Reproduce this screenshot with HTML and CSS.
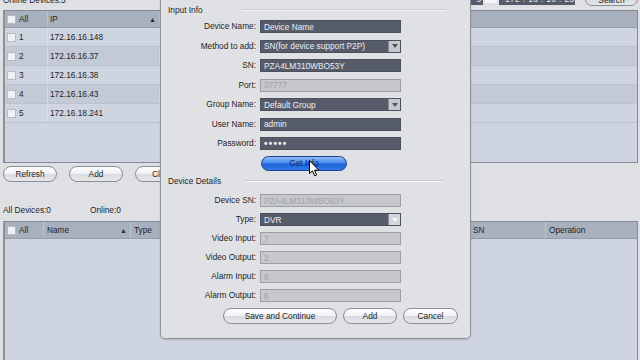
FILE: index.html
```html
<!DOCTYPE html>
<html lang="en">
<head>
  <meta charset="UTF-8" />
  <meta name="viewport" content="width=device-width, initial-scale=1" />
  <title>Device Manager - Manual Add</title>
  <link rel="stylesheet" href="styles.css">
</head>
<body>

  <div class="app">
    <div class="topbar">
      <span class="caption">Online Devices:5</span>
      <div class="filter">
        <span class="ipbox short">5</span>
        <span class="dash"></span>
        <span class="ipbox wide">172 . 16 . 16 . 255</span>
        <button class="pill search">Search</button>
      </div>
    </div>

    <div class="grid grid-online">
      <div class="grid-head">
        <div class="cell c-check"><i class="cb"></i>All</div>
        <div class="cell c-ip">IP<span class="sort">&#9650;</span></div>
        <div class="cell c-rest"></div>
      </div>
      <div class="row">
        <div class="cell c-check"><i class="cb"></i>1</div>
        <div class="cell c-ip">172.16.16.148</div>
        <div class="cell c-rest"></div>
      </div>
      <div class="row alt">
        <div class="cell c-check"><i class="cb"></i>2</div>
        <div class="cell c-ip">172.16.16.37</div>
        <div class="cell c-rest"></div>
      </div>
      <div class="row">
        <div class="cell c-check"><i class="cb"></i>3</div>
        <div class="cell c-ip">172.16.16.38</div>
        <div class="cell c-rest"></div>
      </div>
      <div class="row alt">
        <div class="cell c-check"><i class="cb"></i>4</div>
        <div class="cell c-ip">172.16.16.43</div>
        <div class="cell c-rest"></div>
      </div>
      <div class="row">
        <div class="cell c-check"><i class="cb"></i>5</div>
        <div class="cell c-ip">172.16.18.241</div>
        <div class="cell c-rest"></div>
      </div>
    </div>

    <div class="actions">
      <button class="pill">Refresh</button>
      <button class="pill">Add</button>
      <button class="pill">Clear</button>
    </div>

    <div class="summary">
      <span class="count">All Devices:0</span>
      <span>Online:0</span>
    </div>

    <div class="grid grid-all">
      <div class="grid-head">
        <div class="cell c-check2"><i class="cb"></i>All</div>
        <div class="cell c-name">Name<span class="sort">&#9650;</span></div>
        <div class="cell c-type">Type</div>
        <div class="cell c-sn">SN</div>
        <div class="cell c-op">Operation</div>
      </div>
    </div>
  </div>

  <div class="dialog">
    <div class="group-head">
      <span class="group-title">Input Info</span>
      <span class="group-line"></span>
    </div>
    <div class="form">
      <label>Device Name:</label>
      <div class="field">Device Name</div>
      <label>Method to add:</label>
      <div class="field select">SN(for device support P2P)<span class="arrow"><i></i></span></div>
      <label>SN:</label>
      <div class="field">PZA4LM310WBO53Y</div>
      <label>Port:</label>
      <div class="field off">37777</div>
      <label>Group Name:</label>
      <div class="field select">Default Group<span class="arrow"><i></i></span></div>
      <label>User Name:</label>
      <div class="field">admin</div>
      <label>Password:</label>
      <div class="field dots">&bull;&bull;&bull;&bull;&bull;</div>
    </div>
    <button class="btn-blue">Get Info</button>

    <div class="group-head">
      <span class="group-title">Device Details</span>
      <span class="group-line"></span>
    </div>
    <div class="form details">
      <label>Device SN:</label>
      <div class="field off">PZA4LM310WBO53Y</div>
      <label>Type:</label>
      <div class="field select dim">DVR<span class="arrow"><i></i></span></div>
      <label>Video Input:</label>
      <div class="field off">7</div>
      <label>Video Output:</label>
      <div class="field off">2</div>
      <label>Alarm Input:</label>
      <div class="field off">8</div>
      <label>Alarm Output:</label>
      <div class="field off">6</div>
    </div>

    <div class="dialog-actions">
      <button class="pill w-save">Save and Continue</button>
      <button class="pill w-add">Add</button>
      <button class="pill w-cancel">Cancel</button>
    </div>
  </div>

  <svg class="cursor" width="11" height="17" viewBox="0 0 11 17">
    <path d="M0.5 0.5 L0.5 13.5 L3.5 10.8 L5.6 15.8 L7.6 15 L5.6 10.2 L9.8 10.2 Z" fill="#fff" stroke="#000" stroke-width="1" stroke-linejoin="round"/>
  </svg>

</body>
</html>
```

FILE: styles.css
```css
/* Base */
* { box-sizing: border-box; }
body {
  margin: 0;
  width: 640px;
  height: 360px;
  overflow: hidden;
  position: relative;
  background: #dfe0e4;
  color: #1e1f24;
  font-family: "Liberation Sans", Arial, sans-serif;
  font-size: 8.3px;
}
button { font: inherit; color: inherit; cursor: pointer; }

/* Main window */
.app { padding: 0 2px 0 3px; }
.topbar {
  display: flex;
  height: 18px;
  margin-top: -8px;
}
.caption {
  line-height: 12px;
  margin-top: 2px;
}
.filter {
  margin-left: auto;
  display: flex;
  align-items: flex-start;
}
.ipbox {
  height: 14px;
  margin-top: -1px;
  padding-top: 3px;
  background: #565b6a;
  color: #e6e8ee;
  white-space: nowrap;
}
.ipbox.short { width: 13px; text-align: right; padding-right: 2px; }
.ipbox.wide { width: 76px; padding-left: 6px; letter-spacing: 0.4px; }
.dash {
  width: 12px;
  height: 3px;
  margin: 8px 2px 0;
  background: #f3f4f6;
}
.pill {
  height: 16px;
  padding: 0;
  border: 1px solid #8a8d94;
  border-radius: 8px;
  line-height: 14px;
  background: linear-gradient(#ffffff, #eff0f3 48%, #d9dbe0 52%, #e6e8eb);
}
.search { width: 53px; height: 14px; margin-left: 10px; }

/* Tables */
.grid {
  border: 1px solid #858a96;
  border-left: 2px solid #8b909b;
  background: #ced5e0;
  overflow: hidden;
}
.grid-online { height: 153px; }
.grid-head {
  display: flex;
  height: 17px;
  background: #a8b0bd;
  border-bottom: 1px solid #959dab;
}
.row {
  display: flex;
  height: 19px;
  border-bottom: 1px solid #bcc3ce;
}
.row.alt { background: #c3cad5; }
.cell {
  display: flex;
  align-items: center;
  padding-left: 3px;
  border-right: 1px solid #bfc5cf;
  white-space: nowrap;
}
.row .cell { border-right-color: #dbe0e8; }
.cell:last-child { border-right: none; }
.c-check { width: 43px; padding-left: 2px; }
.c-ip { width: 112px; padding-left: 2px; }
.c-rest { flex: 1; }
.c-check2 { width: 39px; padding-left: 2px; }
.c-name { width: 87px; }
.c-type { flex: 1; }
.c-sn { width: 76px; }
.c-op { width: 91px; }
.sort {
  margin-left: auto;
  margin-right: 3px;
  font-size: 7px;
  color: #2a2d33;
}
.cb {
  width: 9px;
  height: 9px;
  margin-right: 3px;
  background: #eef0f3;
  border: 1px solid #b6bac3;
}

.actions {
  display: flex;
  gap: 12px;
  margin-top: 3px;
}
.actions .pill { width: 54px; }
.summary {
  display: flex;
  height: 12px;
  margin-top: 22px;
  line-height: 12px;
}
.count { width: 87px; }
.grid-all { height: 150px; margin-top: 5px; }

/* Dialog */
.dialog {
  position: absolute;
  left: 160px;
  top: -12px;
  width: 311px;
  height: 351px;
  padding-top: 11px;
  background: #e0e1e5;
  border: 1px solid #8e9299;
  border-radius: 5px;
  box-shadow: 0 1px 2px rgba(0, 0, 0, 0.15);
}
.group-head {
  display: flex;
  align-items: center;
  height: 12px;
  margin-top: 4px;
  padding-left: 7px;
}
.group-title { width: 75px; }
.group-line {
  width: 202px;
  height: 2px;
  border-top: 1px solid #c8cacf;
  border-bottom: 1px solid #f5f5f7;
}
.form {
  display: grid;
  grid-template-columns: 95px 141px;
  grid-auto-rows: 13px;
  column-gap: 4px;
  row-gap: 6.5px;
  margin-top: 4px;
}
.form.details { row-gap: 6px; margin-top: 7px; }
.form label {
  text-align: right;
  line-height: 13px;
  white-space: nowrap;
}
.field {
  display: flex;
  align-items: center;
  height: 13px;
  padding-left: 3px;
  background: #575c6b;
  border: 1px solid #4b505d;
  color: #eceef3;
  white-space: nowrap;
  overflow: hidden;
}
.field.off {
  background: #c7c8cb;
  border-color: #9c9ea4;
  color: #a1a2a7;
}
.field.dots { letter-spacing: 1.2px; font-size: 10px; font-weight: bold; }
.arrow {
  margin-left: auto;
  width: 12px;
  height: 100%;
  display: flex;
  align-items: center;
  justify-content: center;
  background: #c6c8ce;
  border-left: 1px solid #8a8e98;
}
.arrow i {
  width: 0;
  height: 0;
  border-left: 3px solid transparent;
  border-right: 3px solid transparent;
  border-top: 4px solid #4e525c;
}
.dim .arrow { background: #d4d6db; }
.dim .arrow i { border-top-color: #f6f6f8; }

.btn-blue {
  display: block;
  width: 86px;
  height: 15px;
  margin: 6px 0 0 100px;
  padding: 0;
  border: 1px solid #1d418d;
  border-radius: 8px;
  line-height: 13px;
  color: #10296a;
  background: linear-gradient(#8fbcf8, #4a8cef 45%, #1f64d8 55%, #2f7ae8);
}

.dialog-actions {
  display: flex;
  gap: 6px;
  margin-top: 6px;
  padding-left: 62px;
}
.w-save { width: 114px; }
.w-add { width: 54px; }
.w-cancel { width: 55px; }

.cursor {
  position: absolute;
  left: 309px;
  top: 160px;
}
```
